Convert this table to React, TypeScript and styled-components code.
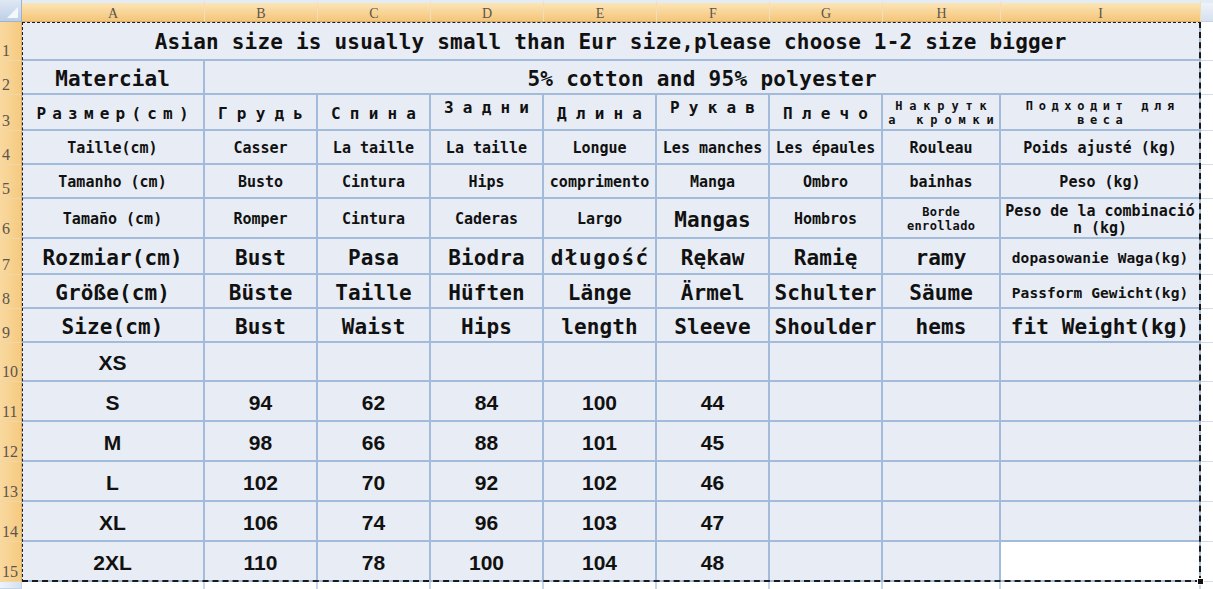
import React from "react";
import styled, { createGlobalStyle, css } from "styled-components";

const colors = {
    cell: "#e8ecf4",
    grid: "#a2bbdb",
    faint: "#d3dce9",
    ink: "#111111",
    headInk: "#5a5550",
    headTop: "#fbe5b8",
    headMid: "#f8d394",
    headBottom: "#f5c67a",
    blueHeadTop: "#eef3fa",
    blueHeadBottom: "#d5e1f0",
};

const mono = `"DejaVu Sans Mono", "Liberation Mono", monospace`;
const sans = `"Liberation Sans", Arial, sans-serif`;
const serif = `"Liberation Serif", "Times New Roman", serif`;

const GlobalStyle = createGlobalStyle`
    html, body {
        margin: 0;
        padding: 0;
        background: #ffffff;
        overflow: hidden;
    }
`;

const Sheet = styled.div`
    position: relative;
    display: grid;
    grid-template-columns: 22px 183px repeat(6, 113px) 118px 200px 12px;
    grid-template-rows: 22px 39px 34px 36px 34px 34px 40px 36px 34px 34px 39px repeat(5, 40px) 7px;
    width: 1213px;
    height: 589px;
    overflow: hidden;
    background: #ffffff;
`;

const Corner = styled.div`
    position: relative;
    background: linear-gradient(#dfe8f4, #bccfe6);
    border-right: 1px solid #9fb3cf;
    border-bottom: 1px solid #9fb3cf;
    box-sizing: border-box;
    &::after {
        content: "";
        position: absolute;
        right: 3px;
        bottom: 3px;
        border-left: 11px solid transparent;
        border-bottom: 11px solid #f4f7fb;
    }
`;

const ColHead = styled.div<{ $off?: boolean }>`
    display: flex;
    align-items: center;
    justify-content: center;
    box-sizing: border-box;
    padding-top: 3px;
    font-family: ${serif};
    font-size: 14px;
    color: ${colors.headInk};
    border-top: 3px solid #e3ebf5;
    border-right: 1px solid #f3dfb7;
    border-bottom: 1px solid #d9b06a;
    background: linear-gradient(${colors.headTop}, ${colors.headMid} 55%, ${colors.headBottom});
    ${({ $off }) => $off && css`
        border-right: none;
        border-bottom: 1px solid #c5d3e6;
        background: linear-gradient(${colors.blueHeadTop}, ${colors.blueHeadBottom});
    `}
`;

const RowHead = styled.div<{ $off?: boolean }>`
    display: flex;
    align-items: flex-end;
    box-sizing: border-box;
    padding: 0 0 1px 2px;
    font-family: ${serif};
    font-size: 16px;
    line-height: 1;
    color: ${colors.headInk};
    background: linear-gradient(90deg, #f9d9a0, #f6ca80);
    border-bottom: 1px solid #f0d7a8;
    border-right: 1px solid #d9b06a;
    ${({ $off }) => $off && css`
        background: linear-gradient(90deg, ${colors.blueHeadTop}, ${colors.blueHeadBottom});
        border-color: #c5d3e6;
    `}
`;

type Font = "mono" | "sans";

const Cell = styled.div<{
    $span?: number;
    $size?: number;
    $ls?: number;
    $font?: Font;
    $top?: boolean;
    $white?: boolean;
}>`
    display: flex;
    align-items: ${({ $top }) => ($top ? "flex-start" : "center")};
    justify-content: center;
    box-sizing: border-box;
    padding-top: 4px;
    padding-left: ${({ $ls }) => $ls ?? 0}px;
    grid-column: span ${({ $span }) => $span ?? 1};
    background: ${({ $white }) => ($white ? "#ffffff" : colors.cell)};
    border-right: 2px solid ${colors.grid};
    border-bottom: 2px solid ${colors.grid};
    font-family: ${({ $font }) => ($font === "sans" ? sans : mono)};
    font-weight: 700;
    font-size: ${({ $size }) => $size ?? 21}px;
    letter-spacing: ${({ $ls }) => $ls ?? 0}px;
    line-height: 1.15;
    text-align: center;
    white-space: nowrap;
    color: ${colors.ink};
`;

const Spare = styled.div<{ $last?: boolean }>`
    box-sizing: border-box;
    background: #ffffff;
    border-bottom: ${({ $last }) => ($last ? "none" : `1px solid ${colors.faint}`)};
`;

const Tail = styled.div`
    box-sizing: border-box;
    background: #ffffff;
    border-right: 2px solid #c7d6ea;
`;

const Marquee = styled.div`
    position: absolute;
    grid-column: 2 / 11;
    grid-row: 2 / 17;
    top: 0;
    left: 0;
    right: 0;
    bottom: 0;
    box-sizing: border-box;
    border-left: 1px dashed #1a1a1a;
    border-top: 1px dashed #1a1a1a;
    border-right: 2px dashed #1a1a1a;
    border-bottom: 2px dashed #1a1a1a;
    pointer-events: none;
    &::after {
        content: "";
        position: absolute;
        right: -5px;
        bottom: -5px;
        width: 5px;
        height: 5px;
        background: #111;
        border: 1px solid #fff;
    }
`;

type C = {
    t?: React.ReactNode;
    span?: number;
    size?: number;
    ls?: number;
    font?: Font;
    top?: boolean;
    white?: boolean;
};

const big = (t: React.ReactNode): C => ({ t, size: 21, ls: 0.1 });
const mid = (t: React.ReactNode): C => ({ t, size: 15 });
const label = (t: React.ReactNode): C => ({ t, size: 14.5, ls: 0.1 });
const cyr = (t: string, top?: boolean): C => ({ t, size: 16, ls: 9.2, top });
const num = (t?: string): C => ({ t, font: "sans", size: 21 });

const rows: C[][] = [
    [{ t: "Asian size is usually small than Eur size,please choose 1-2 size bigger", span: 9, size: 21, ls: 0.2 }],
    [big("Matercial"), { t: "5% cotton and 95% polyester", span: 8, size: 21, ls: 0.3 }],
    [
        { t: "Размер(cm)", size: 16, ls: 6.2 },
        cyr("Грудь"),
        cyr("Спина"),
        cyr("Задни", true),
        cyr("Длина"),
        cyr("Рукав", true),
        cyr("Плечо"),
        { t: <>Накрутк<br />а кромки</>, size: 12, ls: 6.8 },
        { t: <>Подходит для<br />веса</>, size: 12, ls: 5.6 },
    ],
    [mid("Taille(cm)"), mid("Casser"), mid("La taille"), mid("La taille"), mid("Longue"), mid("Les manches"), mid("Les épaules"), mid("Rouleau"), mid("Poids ajusté (kg)")],
    [mid("Tamanho (cm)"), mid("Busto"), mid("Cintura"), mid("Hips"), mid("comprimento"), mid("Manga"), mid("Ombro"), mid("bainhas"), mid("Peso (kg)")],
    [
        mid("Tamaño (cm)"),
        mid("Romper"),
        mid("Cintura"),
        mid("Caderas"),
        mid("Largo"),
        big("Mangas"),
        mid("Hombros"),
        { t: <>Borde<br />enrollado</>, size: 12, ls: 0.4 },
        mid(<>Peso de la combinació<br />n (kg)</>),
    ],
    [big("Rozmiar(cm)"), big("Bust"), big("Pasa"), big("Biodra"), { t: "długość", size: 21, ls: 1.5 }, big("Rękaw"), big("Ramię"), big("ramy"), label("dopasowanie Waga(kg)")],
    [big("Größe(cm)"), big("Büste"), big("Taille"), big("Hüften"), big("Länge"), big("Ärmel"), big("Schulter"), big("Säume"), label("Passform Gewicht(kg)")],
    [big("Size(cm)"), big("Bust"), big("Waist"), big("Hips"), big("length"), big("Sleeve"), big("Shoulder"), big("hems"), big("fit Weight(kg)")],
    [num("XS"), num(), num(), num(), num(), num(), num(), num(), num()],
    [num("S"), num("94"), num("62"), num("84"), num("100"), num("44"), num(), num(), num()],
    [num("M"), num("98"), num("66"), num("88"), num("101"), num("45"), num(), num(), num()],
    [num("L"), num("102"), num("70"), num("92"), num("102"), num("46"), num(), num(), num()],
    [num("XL"), num("106"), num("74"), num("96"), num("103"), num("47"), num(), num(), num()],
    [num("2XL"), num("110"), num("78"), num("100"), num("104"), num("48"), num(), num(), { white: true }],
];

const letters = ["A", "B", "C", "D", "E", "F", "G", "H", "I"];

export default function App() {
    return (
        <>
            <GlobalStyle />
            <Sheet>
                <Corner />
                {letters.map((l) => (
                    <ColHead key={l}>{l}</ColHead>
                ))}
                <ColHead $off />

                {rows.map((row, r) => (
                    <React.Fragment key={r}>
                        <RowHead>{r + 1}</RowHead>
                        {row.map((c, i) => (
                            <Cell
                                key={i}
                                $span={c.span}
                                $size={c.size}
                                $ls={c.ls}
                                $font={c.font}
                                $top={c.top}
                                $white={c.white}
                            >
                                {c.t}
                            </Cell>
                        ))}
                        <Spare />
                    </React.Fragment>
                ))}

                <RowHead $off />
                {letters.map((l) => (
                    <Tail key={l} />
                ))}
                <Spare $last />

                <Marquee />
            </Sheet>
        </>
    );
}
